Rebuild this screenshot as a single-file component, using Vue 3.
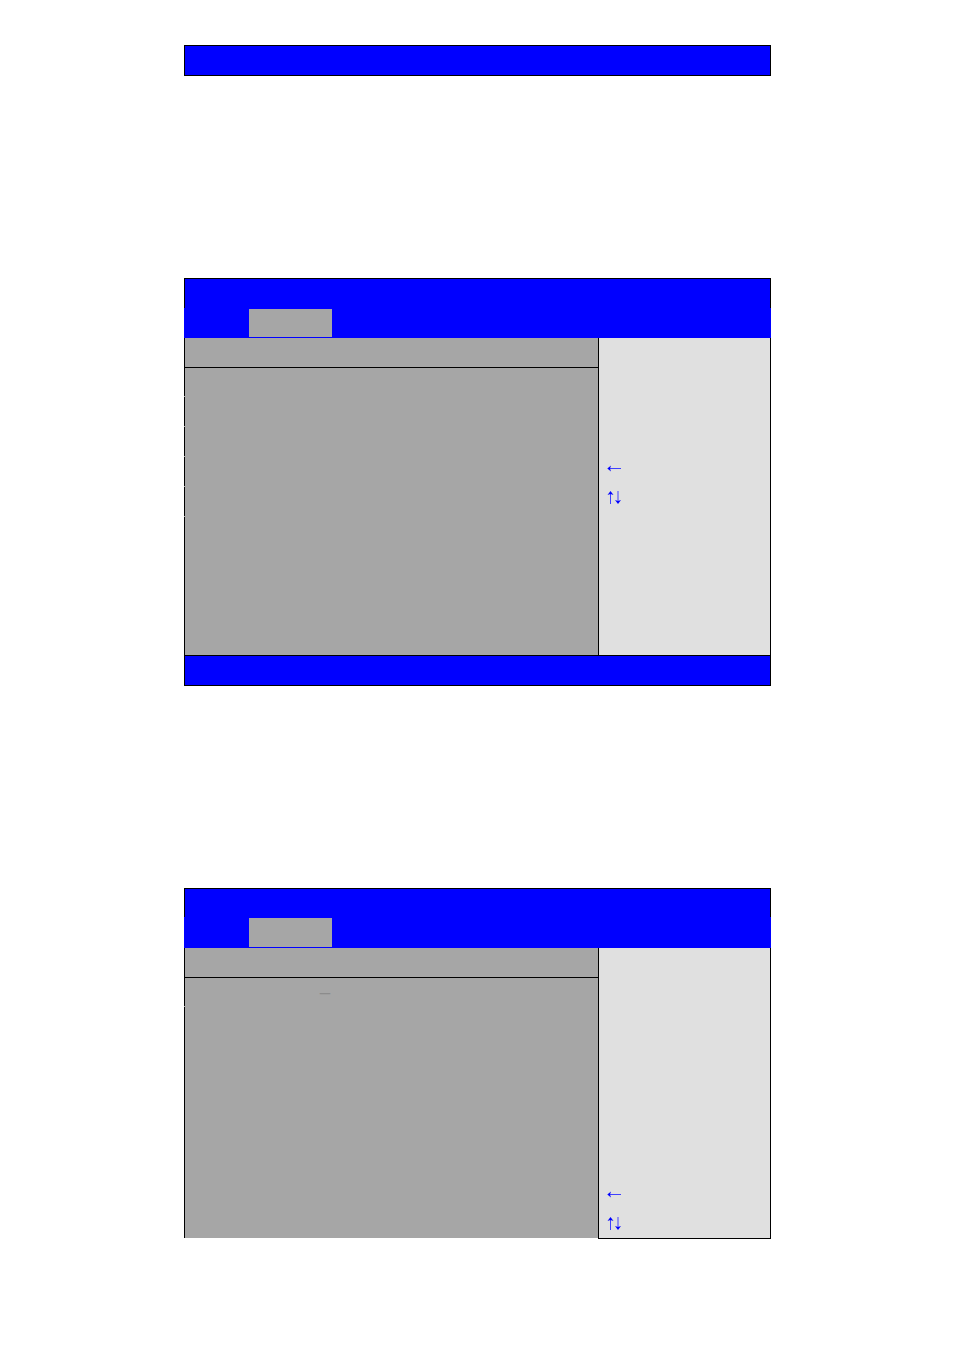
<script setup>
import { reactive } from 'vue'

/* ===============================
   Screens
================================ */
const screens = reactive([
  {
    id: 'short',
    rows: ['', '', '', '', '', ''],
    footer: true
  },
  {
    id: 'long',
    rows: ['_', ''],
    footer: false
  }
])
</script>

<template>
  <div class="page">
    <div class="bar"></div>

    <section
      v-for="screen in screens"
      :key="screen.id"
      class="screen"
      :class="screen.id"
    >
      <!-- title and menu -->
      <header class="title"></header>
      <div class="menu">
        <div class="tab"></div>
      </div>

      <div class="content">
        <main class="settings">
          <div class="heading"></div>
          <div v-for="(row, i) in screen.rows" :key="i" class="row">
            <span v-if="row" class="value">{{ row }}</span>
          </div>
        </main>

        <!-- key help -->
        <aside class="help">
          <div class="key">
            <svg width="15" height="13" viewBox="0 0 15 13">
              <path class="line" d="M2 6.5H14" />
              <path class="head" d="M0.3 6.5L4 3.5L3 6.5L4 9.5Z" />
            </svg>
          </div>
          <div class="key">
            <svg width="15" height="13" viewBox="0 0 15 13">
              <path class="line" d="M3.5 2V13M11 0V11" />
              <path class="head" d="M3.5 0L6.5 4L3.5 3L0.5 4Z" />
              <path class="head" d="M11 13L14 9L11 10L8 9Z" />
            </svg>
          </div>
        </aside>
      </div>

      <footer v-if="screen.footer" class="bar"></footer>
    </section>
  </div>
</template>

<style>
body {
  margin: 0;
  background: #ffffff;
}
</style>

<style scoped>
* {
  box-sizing: border-box;
}

.page {
  display: flex;
  flex-direction: column;
  gap: 202px;
  padding: 45px 183px 111px 184px;
  font-family: 'Liberation Sans', Arial, sans-serif;
}

.bar {
  height: 31px;
  background: #0000ff;
  border: 1px solid #000000;
}

.title {
  height: 30px;
  background: #0000ff;
  border: 1px solid #000000;
  border-bottom: none;
}

.menu {
  height: 30px;
  padding: 1px 0 1px 65px;
  background: #0000ff;
}

.long .title {
  height: 29px;
}

.long .menu {
  height: 31px;
}

.tab {
  width: 83px;
  height: 100%;
  background: #a6a6a6;
}

.content {
  display: flex;
}

.settings {
  flex: 1;
  display: flex;
  flex-direction: column;
  background: #a6a6a6;
}

.heading {
  height: 30px;
  border-left: 1px solid #000000;
  border-bottom: 1px solid #000000;
}

.row {
  height: 29px;
  margin-bottom: 1px;
  padding-left: 135px;
  border-left: 1px solid #000000;
}

.heading + .row {
  height: 28px;
}

.row:last-child {
  flex: 1;
  margin-bottom: 0;
}

.value {
  display: block;
  font-size: 18px;
  line-height: 12px;
  color: #8c8c8c;
}

.help {
  width: 173px;
  padding: 116px 8px 143px;
  background: #e0e0e0;
  border-left: 1px solid #000000;
  border-right: 1px solid #000000;
}

.long .help {
  padding: 232px 8px 0;
  border-bottom: 1px solid #000000;
}

.long .settings {
  margin-bottom: 1px;
}

.key {
  display: flex;
  align-items: center;
  height: 29px;
}

.line {
  fill: none;
  stroke: #4040ff;
  stroke-width: 1;
}

.head {
  fill: #0000ff;
}
</style>
